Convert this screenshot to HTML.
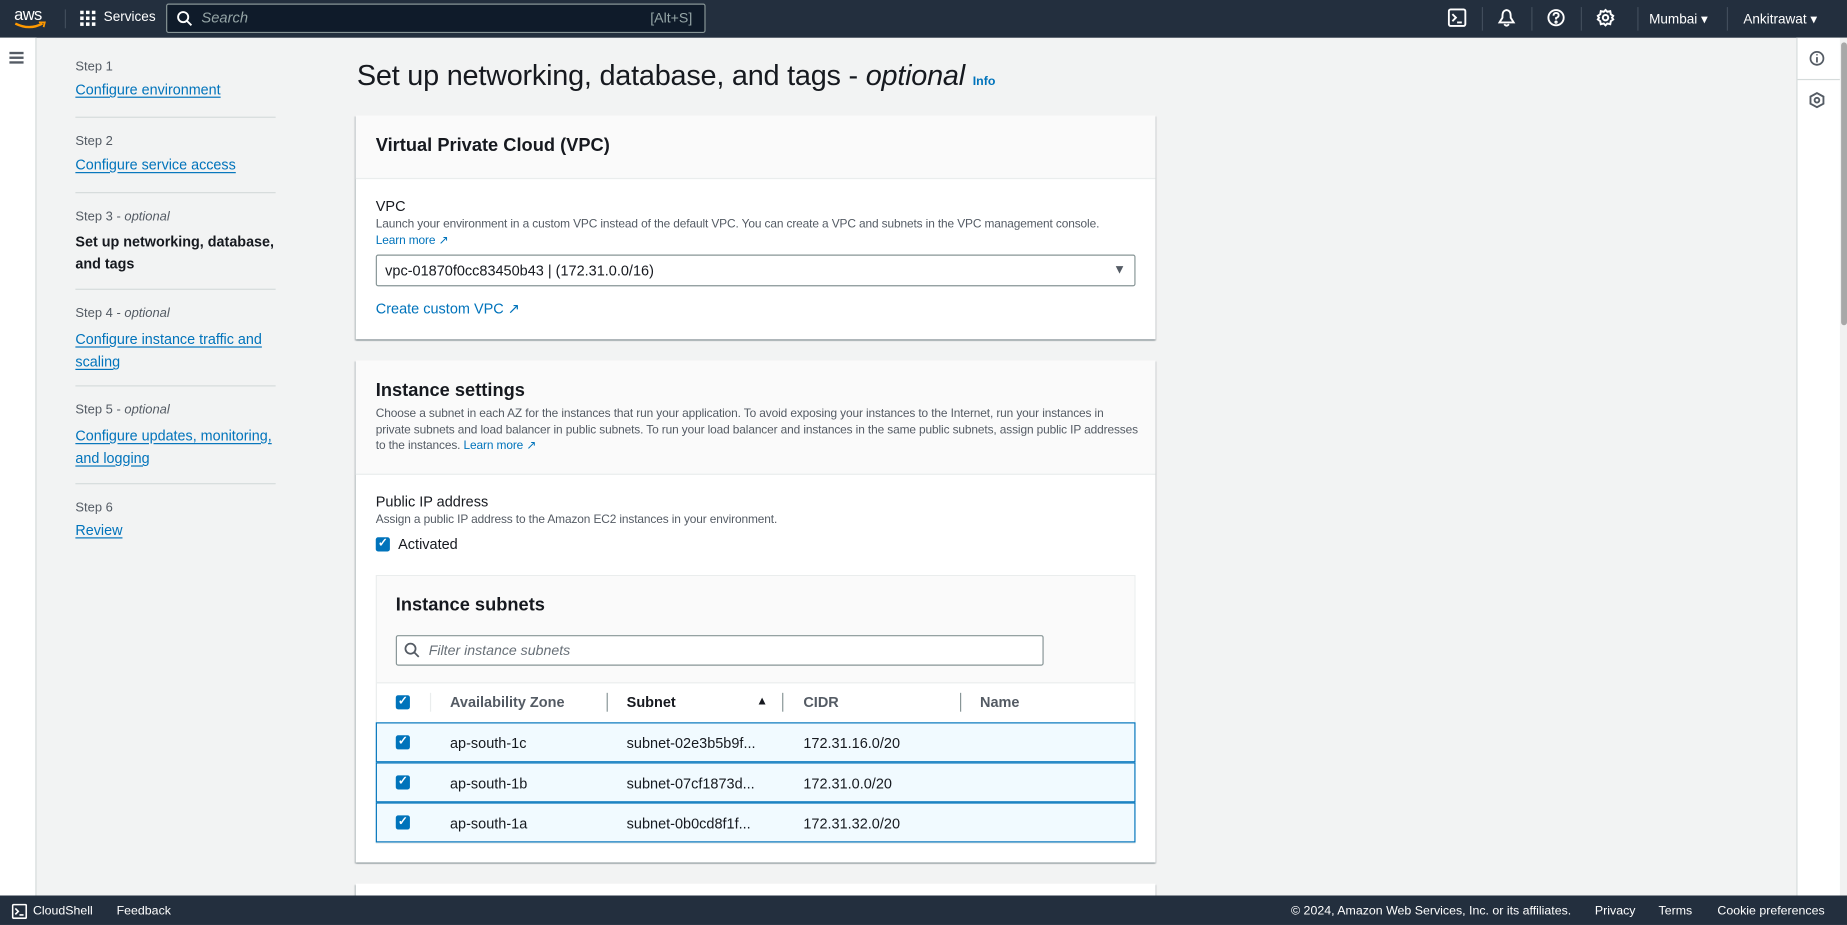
<!DOCTYPE html>
<html><head><meta charset="utf-8"><style>
*{box-sizing:border-box;margin:0;padding:0}
html,body{width:1847px;height:925px;overflow:hidden;background:#f2f3f3}
#w{width:1568px;height:785px;transform:scale(1.17793,1.1783);transform-origin:0 0;position:relative;font-family:"Liberation Sans",sans-serif;color:#16191f;background:#f2f3f3}
.a{position:absolute}
.hd{left:0;top:0;width:1568px;height:32px;background:#232f3e}
.ft{left:0;top:760px;width:1568px;height:25px;background:#232f3e;color:#fff;font-size:10.5px}
.lnk{color:#0073bb;text-decoration:underline;text-underline-offset:2px}
.nav{font-size:12.2px}
.sl{color:#545b64;font-size:11px}
.hr{height:1px;background:#d5dbdb;width:170px;left:64px}
.panel{background:#fff;box-shadow:0 1px 1px rgba(0,28,36,.3),1px 1px 1px rgba(0,28,36,.15),-1px 1px 1px rgba(0,28,36,.15)}
.ph{background:#fafafa;border-bottom:1px solid #eaeded}
h2{font-size:15.5px;font-weight:bold}
.d{font-size:10.1px;color:#545b64;line-height:13.5px;letter-spacing:-0.1px}
.cb{width:12px;height:12px;background:#0073bb;border-radius:2px;color:#fff;font-size:10px;line-height:12px;text-align:center;font-weight:bold}
.row{left:319px;width:645px;height:34px;background:#f1faff;border:1px solid #0073bb;font-size:12.3px}
.row span{position:absolute;top:10px}
.sep{width:1px;height:16px;background:#879596}
</style></head><body><div id="w">
<div class="a hd">
 <div class="a" style="left:12px;top:4px;color:#fff;font-size:14px;letter-spacing:-0.5px">aws</div>
 <svg class="a" style="left:12px;top:18px" width="28" height="8"><path d="M1 2 Q13 8 24 2" stroke="#ff9900" stroke-width="2" fill="none"/><path d="M21 1 L26 1 L25 5" stroke="#ff9900" stroke-width="1.5" fill="none"/></svg>
 <div class="a" style="left:55px;top:8px;width:1px;height:16px;background:#414d5c"></div>
 <svg class="a" style="left:68px;top:9px" width="14" height="14" fill="#fff"><rect x="0" y="0" width="3" height="3"/><rect x="5" y="0" width="3" height="3"/><rect x="10" y="0" width="3" height="3"/><rect x="0" y="5" width="3" height="3"/><rect x="5" y="5" width="3" height="3"/><rect x="10" y="5" width="3" height="3"/><rect x="0" y="10" width="3" height="3"/><rect x="5" y="10" width="3" height="3"/><rect x="10" y="10" width="3" height="3"/></svg>
 <div class="a" style="left:88px;top:9px;color:#fff;font-size:11.5px">Services</div>
 <div class="a" style="left:141px;top:3px;width:458px;height:25px;border:1px solid #879596;border-radius:2px;background:#0f1b2a"></div>
 <svg class="a" style="left:150px;top:9px" width="14" height="14" fill="none" stroke="#fff" stroke-width="1.6"><circle cx="5.5" cy="5.5" r="4.3"/><path d="M8.7 8.7 L12.5 12.5"/></svg>
 <div class="a" style="left:171px;top:8px;color:#95a5a6;font-size:12.5px;font-style:italic">Search</div>
 <div class="a" style="left:552px;top:8px;color:#95a5a6;font-size:12px">[Alt+S]</div>
 <svg class="a" style="left:1229px;top:7px" width="16" height="16" fill="none" stroke="#fff" stroke-width="1.6"><rect x="1" y="1" width="14" height="14" rx="1.5"/><path d="M4 5 L7 8 L4 11 M8 12 H12"/></svg>
 <div class="a" style="left:1258px;top:6px;width:1px;height:20px;background:#414d5c"></div>
 <svg class="a" style="left:1271px;top:7px" width="16" height="16" fill="none" stroke="#fff" stroke-width="1.6"><path d="M8 1.5 C4.5 2 4.5 5 4.5 8 L2 12 H14 L11.5 8 C11.5 5 11.5 2 8 1.5Z M6 13.5 Q8 16 10 13.5"/></svg>
 <div class="a" style="left:1300px;top:6px;width:1px;height:20px;background:#414d5c"></div>
 <svg class="a" style="left:1313px;top:7px" width="16" height="16" fill="none" stroke="#fff" stroke-width="1.6"><circle cx="8" cy="8" r="6.5"/><path d="M5.8 6.3 Q6 4 8 4 Q10.2 4 10.2 6 Q10.2 7.4 8 8.3 V9.6"/><circle cx="8" cy="11.8" r="0.6"/></svg>
 <div class="a" style="left:1342px;top:6px;width:1px;height:20px;background:#414d5c"></div>
 <svg class="a" style="left:1355px;top:7px" width="16" height="16" fill="none" stroke="#fff" stroke-width="1.7"><circle cx="8" cy="8" r="2.3"/><path d="M8 1.5 L9.5 3 L12 2.5 L12.5 5 L14.5 6.5 L13.5 8 L14.5 9.5 L12.5 11 L12 13.5 L9.5 13 L8 14.5 L6.5 13 L4 13.5 L3.5 11 L1.5 9.5 L2.5 8 L1.5 6.5 L3.5 5 L4 2.5 L6.5 3Z"/></svg>
 <div class="a" style="left:1390px;top:6px;width:1px;height:20px;background:#414d5c"></div>
 <div class="a" style="left:1400px;top:9px;color:#fff;font-size:11.5px">Mumbai ▾</div>
 <div class="a" style="left:1466px;top:6px;width:1px;height:20px;background:#414d5c"></div>
 <div class="a" style="left:1480px;top:9px;color:#fff;font-size:11.5px">Ankitrawat ▾</div>
</div>
<div class="a" style="left:0;top:32px;width:31px;height:728px;background:#fff;border-right:1px solid #d5dbdb"></div>
<div class="a" style="left:8px;top:44px;width:12px;height:2px;background:#545b64;box-shadow:0 4px 0 #545b64,0 8px 0 #545b64"></div>
<div class="a" style="left:1525px;top:32px;width:37px;height:728px;background:#fff;border-left:1px solid #d5dbdb"></div>
<div class="a" style="left:1526px;top:67px;width:36px;height:1px;background:#d5dbdb"></div>
<svg class="a" style="left:1536px;top:43px" width="13" height="13" fill="none" stroke="#545b64" stroke-width="1.5"><circle cx="6.5" cy="6.5" r="5.5"/><path d="M6.5 5.5 V10 M6.5 3 V4"/></svg>
<svg class="a" style="left:1536px;top:78px" width="13" height="14" fill="none" stroke="#545b64" stroke-width="1.6"><path d="M6.5 1 L12 4 V10 L6.5 13 L1 10 V4Z"/><circle cx="6.5" cy="7" r="2"/></svg>
<div class="a" style="left:1562px;top:32px;width:6px;height:728px;background:#f1f1f1"></div>
<div class="a" style="left:1563px;top:36px;width:5px;height:240px;background:#a8a8a8;border-radius:3px"></div>

<div class="a sl" style="left:64px;top:51px">Step 1</div>
<div class="a nav lnk" style="left:64px;top:69px">Configure environment</div>
<div class="a hr" style="top:99px"></div>
<div class="a sl" style="left:64px;top:114px">Step 2</div>
<div class="a nav lnk" style="left:64px;top:133px">Configure service access</div>
<div class="a hr" style="top:163px"></div>
<div class="a sl" style="left:64px;top:178px">Step 3 - <i>optional</i></div>
<div class="a nav" style="left:64px;top:196px;font-weight:bold;line-height:19px">Set up networking, database,<br>and tags</div>
<div class="a hr" style="top:245px"></div>
<div class="a sl" style="left:64px;top:260px">Step 4 - <i>optional</i></div>
<div class="a nav lnk" style="left:64px;top:279px;line-height:19px">Configure instance traffic and<br>scaling</div>
<div class="a hr" style="top:327px"></div>
<div class="a sl" style="left:64px;top:342px">Step 5 - <i>optional</i></div>
<div class="a nav lnk" style="left:64px;top:361px;line-height:19px">Configure updates, monitoring,<br>and logging</div>
<div class="a hr" style="top:410px"></div>
<div class="a sl" style="left:64px;top:425px">Step 6</div>
<div class="a nav lnk" style="left:64px;top:443px">Review</div>

<div class="a" style="left:303px;top:51px;font-size:24.5px;white-space:nowrap;letter-spacing:-0.2px">Set up networking, database, and tags - <i>optional</i> <span style="font-size:10.5px;font-weight:bold;color:#0073bb;letter-spacing:0">Info</span></div>

<div class="a panel" style="left:302px;top:98px;width:679px;height:190px">
 <div class="a ph" style="left:0;top:0;width:679px;height:54px"></div>
 <h2 class="a" style="left:17px;top:17px">Virtual Private Cloud (VPC)</h2>
 <div class="a" style="left:17px;top:70px;font-size:12.3px">VPC</div>
 <div class="a d" style="left:17px;top:86px;white-space:nowrap">Launch your environment in a custom VPC instead of the default VPC. You can create a VPC and subnets in the VPC management console.</div>
 <div class="a d" style="left:17px;top:100px;color:#0073bb">Learn more ↗</div>
 <div class="a" style="left:17px;top:118px;width:645px;height:27px;border:1px solid #879596;border-radius:2px;font-size:12.3px;padding:6px 7px">vpc-01870f0cc83450b43 | (172.31.0.0/16)</div>
 <div class="a" style="left:643px;top:125px;font-size:11px;color:#545b64">▼</div>
 <div class="a" style="left:17px;top:157px;font-size:12.3px;color:#0073bb">Create custom VPC ↗</div>
</div>

<div class="a panel" style="left:302px;top:306px;width:679px;height:426px">
 <div class="a ph" style="left:0;top:0;width:679px;height:97px"></div>
 <h2 class="a" style="left:17px;top:17px">Instance settings</h2>
 <div class="a d" style="left:17px;top:39px;width:650px">Choose a subnet in each AZ for the instances that run your application. To avoid exposing your instances to the Internet, run your instances in private subnets and load balancer in public subnets. To run your load balancer and instances in the same public subnets, assign public IP addresses to the instances. <span style="color:#0073bb">Learn more ↗</span></div>
 <div class="a" style="left:17px;top:113px;font-size:12.3px">Public IP address</div>
 <div class="a d" style="left:17px;top:129px">Assign a public IP address to the Amazon EC2 instances in your environment.</div>
 <div class="a cb" style="left:17px;top:150px">✓</div>
 <div class="a" style="left:36px;top:149px;font-size:12.3px">Activated</div>
</div>
<div class="a" style="left:319px;top:488px;width:645px;height:228px;background:#fff;border:1px solid #eaeded"></div>
<div class="a" style="left:320px;top:489px;width:643px;height:91px;background:#fafafa;border-bottom:1px solid #eaeded"></div>
<h2 class="a" style="left:336px;top:505px">Instance subnets</h2>
<div class="a" style="left:336px;top:539px;width:550px;height:26px;border:1px solid #879596;border-radius:2px;background:#fff"></div>
<svg class="a" style="left:343px;top:545px" width="14" height="14" fill="none" stroke="#545b64" stroke-width="1.5"><circle cx="5.5" cy="5.5" r="4.3"/><path d="M8.7 8.7 L12.5 12.5"/></svg>
<div class="a" style="left:364px;top:545px;font-size:12px;font-style:italic;color:#687078">Filter instance subnets</div>
<div class="a cb" style="left:336px;top:590px">✓</div>
<div class="a sep" style="left:365px;top:588px;background:#eaeded"></div>
<div class="a" style="left:382px;top:589px;font-size:12.3px;font-weight:bold;color:#545b64">Availability Zone</div>
<div class="a sep" style="left:515px;top:588px"></div>
<div class="a" style="left:532px;top:589px;font-size:12.3px;font-weight:bold">Subnet</div>
<div class="a" style="left:642px;top:590px;font-size:10px">▲</div>
<div class="a sep" style="left:664px;top:588px"></div>
<div class="a" style="left:682px;top:589px;font-size:12.3px;font-weight:bold;color:#545b64">CIDR</div>
<div class="a sep" style="left:815px;top:588px"></div>
<div class="a" style="left:832px;top:589px;font-size:12.3px;font-weight:bold;color:#545b64">Name</div>
<div class="a row" style="top:613px"><div class="a cb" style="left:16px;top:10px">✓</div><span style="left:62px">ap-south-1c</span><span style="left:212px">subnet-02e3b5b9f...</span><span style="left:362px">172.31.16.0/20</span></div>
<div class="a row" style="top:647px"><div class="a cb" style="left:16px;top:10px">✓</div><span style="left:62px">ap-south-1b</span><span style="left:212px">subnet-07cf1873d...</span><span style="left:362px">172.31.0.0/20</span></div>
<div class="a row" style="top:681px"><div class="a cb" style="left:16px;top:10px">✓</div><span style="left:62px">ap-south-1a</span><span style="left:212px">subnet-0b0cd8f1f...</span><span style="left:362px">172.31.32.0/20</span></div>
<div class="a panel" style="left:302px;top:750px;width:679px;height:20px"></div>

<div class="a ft">
 <svg class="a" style="left:10px;top:7px" width="13" height="13" fill="none" stroke="#fff" stroke-width="1.4"><rect x="0.7" y="0.7" width="11.6" height="11.6" rx="1"/><path d="M3 4 L5.5 6.5 L3 9 M6.5 9.5 H10"/></svg>
 <div class="a" style="left:28px;top:7px">CloudShell</div>
 <div class="a" style="left:99px;top:7px">Feedback</div>
 <div class="a" style="left:1096px;top:7px">© 2024, Amazon Web Services, Inc. or its affiliates.</div>
 <div class="a" style="left:1354px;top:7px">Privacy</div>
 <div class="a" style="left:1408px;top:7px">Terms</div>
 <div class="a" style="left:1458px;top:7px">Cookie preferences</div>
</div>
</div></body></html>
